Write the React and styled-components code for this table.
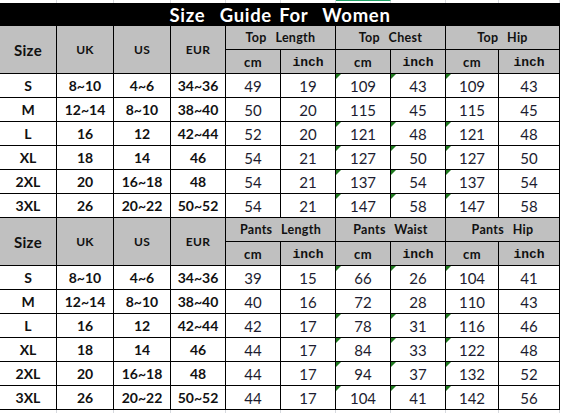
import React from "react";
import styled, { createGlobalStyle, css } from "styled-components";

const Global = createGlobalStyle`
  html, body { margin: 0; padding: 0; background: #fff; }
  body { overflow: hidden; }
`;

const COLS = "57px 57px 57px 55px 55px 55px 55px 55px 53px 61px";
const HEAD_FONT = `"Lato", "DejaVu Sans", sans-serif`;
const MONO = `"Liberation Mono", "Courier New", monospace`;

const Page = styled.div`
  display: flex;
  flex-direction: column;
  width: 561px;
`;

const Strip = styled.div`
  display: grid;
  grid-template-columns: ${COLS};
  height: ${(p) => p.$h}px;
`;

const StripCell = styled.div`
  box-sizing: border-box;
  border-right: 1px solid #d6d9de;
  ${(p) =>
    p.$active &&
    css`
      border-top: 1px solid #21a366;
    `}
`;

const Sheet = styled.div`
  display: grid;
  grid-template-columns: ${COLS};
  grid-template-rows: 23px repeat(16, 24px);
`;

const Title = styled.div`
  grid-column: 1 / -1;
  background: #000;
  color: #fff;
  font-family: ${HEAD_FONT};
  font-weight: 700;
  font-size: 18.5px;
  letter-spacing: 0.7px;
  word-spacing: 2px;
  white-space: pre;
  display: flex;
  align-items: center;
  justify-content: center;
  padding-top: 1px;
  box-sizing: border-box;
`;

const Cell = styled.div`
  position: relative;
  box-sizing: border-box;
  border-right: 1px solid #000;
  border-bottom: 1px solid #000;
  display: flex;
  align-items: center;
  justify-content: center;
  white-space: pre;
  color: #1b1b1b;
  ${(p) => p.$span && css`grid-column: span ${p.$span};`}
  ${(p) => p.$rows && css`grid-row: span ${p.$rows};`}
`;

const HeadCell = styled(Cell)`
  background: #c0c0c0;
  font-family: ${HEAD_FONT};
  font-weight: 700;
  font-size: ${(p) => p.$size || 12}px;
  letter-spacing: 0.3px;
  word-spacing: 1px;
  color: #111;
`;

const MonoHead = styled(HeadCell)`
  font-family: ${MONO};
  font-size: 13px;
  letter-spacing: 0;
  padding-top: 2px;
`;

const BoldCell = styled(Cell)`
  font-family: ${HEAD_FONT};
  font-weight: 700;
  font-size: 14px;
  color: #111;
`;

const NumCell = styled(Cell)`
  font-family: ${HEAD_FONT};
  font-weight: 400;
  font-size: 15px;
  color: #1c1c30;
  ${(p) =>
    p.$mark &&
    css`
      &::before {
        content: "";
        position: absolute;
        left: 0;
        top: 0;
        width: 0;
        height: 0;
        border-top: 5px solid #1f7a1f;
        border-right: 5px solid transparent;
      }
    `}
`;

const sizes = ["S", "M", "L", "XL", "2XL", "3XL"];
const uk = ["8~10", "12~14", "16", "18", "20", "26"];
const us = ["4~6", "8~10", "12", "14", "16~18", "20~22"];
const eur = ["34~36", "38~40", "42~44", "46", "48", "50~52"];

const topData = [
  [49, 19, 109, 43, 109, 43],
  [50, 20, 115, 45, 115, 45],
  [52, 20, 121, 48, 121, 48],
  [54, 21, 127, 50, 127, 50],
  [54, 21, 137, 54, 137, 54],
  [54, 21, 147, 58, 147, 58],
];

const bottomData = [
  [39, 15, 66, 26, 104, 41],
  [40, 16, 72, 28, 110, 43],
  [42, 17, 78, 31, 116, 46],
  [44, 17, 84, 33, 122, 48],
  [44, 17, 94, 37, 132, 52],
  [44, 17, 104, 41, 142, 56],
];

function Section({ groups, data }) {
  return (
    <>
      <HeadCell $rows={2} $size={15}>Size</HeadCell>
      <HeadCell $rows={2}>UK</HeadCell>
      <HeadCell $rows={2}>US</HeadCell>
      <HeadCell $rows={2}>EUR</HeadCell>
      {groups.map((g) => (
        <HeadCell key={g} $span={2} $size={12.5}>
          {g}
        </HeadCell>
      ))}
      {groups.map((g) => (
        <React.Fragment key={g + "sub"}>
          <HeadCell $size={13}>cm</HeadCell>
          <MonoHead>inch</MonoHead>
        </React.Fragment>
      ))}
      {data.map((row, i) => (
        <React.Fragment key={i}>
          <BoldCell>{sizes[i]}</BoldCell>
          <BoldCell>{uk[i]}</BoldCell>
          <BoldCell>{us[i]}</BoldCell>
          <BoldCell>{eur[i]}</BoldCell>
          {row.map((v, j) => (
            <NumCell key={j} $mark={i !== 1 && j >= 2 && j <= 4}>
              {v}
            </NumCell>
          ))}
        </React.Fragment>
      ))}
    </>
  );
}

export default function App() {
  return (
    <Page>
      <Global />
      <Strip $h={3}>
        {Array.from({ length: 10 }).map((_, i) => (
          <StripCell key={i} $active={i === 6} />
        ))}
      </Strip>
      <Sheet>
        <Title>{"Size  Guide For  Women"}</Title>
        <Section groups={["Top  Length", "Top  Chest", "Top  Hip"]} data={topData} />
        <Section groups={["Pants  Length", "Pants  Waist", "Pants  Hip"]} data={bottomData} />
      </Sheet>
      <Strip $h={6}>
        {Array.from({ length: 10 }).map((_, i) => (
          <StripCell key={i} />
        ))}
      </Strip>
    </Page>
  );
}
